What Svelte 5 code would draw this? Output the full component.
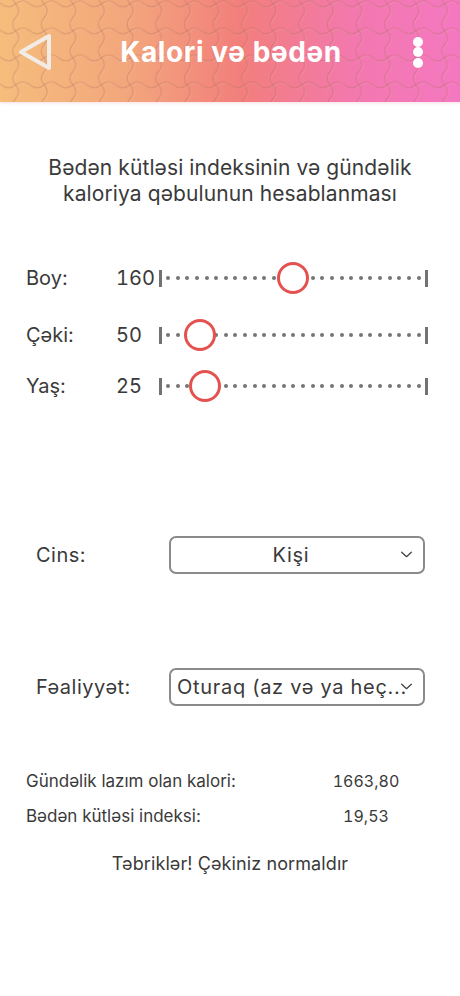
<script lang="ts">
	const sliders = [
		{ label: 'Boy:', value: 160, pos: 131.300, cls: 'boy' },
		{ label: 'Çəki:', value: 50, pos: 38, cls: 'ceki' },
		{ label: 'Yaş:', value: 25, pos: 43, cls: 'yas' }
	];
	const dots = Array(27);
</script>

<div class="page">
	<header class="topbar">
		<svg class="waves" aria-hidden="true">
			<defs>
				<g id="cell">
					<path d="M0 9.750C7.150 9.750 7.150 3.750 14.300 3.750S21.450 9.750 28.600 9.750" />
					<path d="M4.150 0C4.150 6.750 10.150 6.750 10.150 13.500S4.150 20.250 4.150 27" />
				</g>
				<pattern id="wave" width="28.600" height="27" patternUnits="userSpaceOnUse" x="8.600" y="-2.750">
					<use href="#cell" class="shine" x="0.800" y="0.800" />
					<use href="#cell" class="groove" />
				</pattern>
			</defs>
			<rect width="100%" height="100%" fill="url(#wave)" />
		</svg>
		<button class="icon-btn back" aria-label="Geri">
			<svg viewBox="0 0 40 44" width="40" height="44">
				<polygon points="5,22 33,6 33,38" />
			</svg>
		</button>
		<h1>Kalori və bədən</h1>
		<button class="icon-btn more" aria-label="Menyu">
			<span></span>
			<span></span>
			<span></span>
		</button>
	</header>

	<main>
		<p class="intro">Bədən kütləsi indeksinin və gündəlik<br />kaloriya qəbulunun hesablanması</p>

		<section class="sliders">
			{#each sliders as s}
				<div class="slider-row {s.cls}">
					<span class="label">{s.label}</span>
					<span class="value">{s.value}</span>
					<div class="track">
						{#each dots as _}
							<i class="dot"></i>
						{/each}
						<div class="thumb" style="left: {s.pos}px"></div>
					</div>
				</div>
			{/each}
		</section>

		<div class="field gender">
			<span class="field-label">Cins:</span>
			<div class="select center">
				<span>Kişi</span>
				<svg class="chevron" viewBox="0 0 14 8" width="13" height="7">
					<path d="M1.500 1.500L7 6.500L12.500 1.500" />
				</svg>
			</div>
		</div>

		<div class="field activity">
			<span class="field-label">Fəaliyyət:</span>
			<div class="select">
				<span>Oturaq (az və ya heç...</span>
				<svg class="chevron" viewBox="0 0 14 8" width="13" height="7">
					<path d="M1.500 1.500L7 6.500L12.500 1.500" />
				</svg>
			</div>
		</div>

		<section class="results">
			<div class="result">
				<span>Gündəlik lazım olan kalori:</span>
				<span class="num">1663,80</span>
			</div>
			<div class="result">
				<span>Bədən kütləsi indeksi:</span>
				<span class="num">19,53</span>
			</div>
		</section>

		<p class="message">Təbriklər! Çəkiniz normaldır</p>
	</main>
</div>

<style>
	:global(body) {
		margin: 0;
		background: #fff;
	}

	.page {
		width: 460px;
		height: 996px;
		overflow: hidden;
		font-family: Inter, 'Noto Sans', sans-serif;
		color: #3a3a3a;
	}

	.topbar {
		position: relative;
		display: flex;
		align-items: center;
		justify-content: space-between;
		height: 102px;
		padding: 2px 30px 0 16px;
		box-sizing: border-box;
		background: linear-gradient(90deg, #f5bd7c 0%, #f3a67c 28%, #f27f7c 52%, #f378b0 78%, #f478c0 100%);
		box-shadow: 0 1px 3px rgba(240, 160, 170, 0.35);
	}

	.waves {
		position: absolute;
		inset: 0;
		width: 100%;
		height: 100%;
	}

	.waves :global(path) {
		fill: none;
		stroke-width: 1.200;
	}

	.waves :global(.groove) {
		stroke: rgba(170, 90, 70, 0.3);
	}

	.waves :global(.shine) {
		stroke: rgba(255, 255, 255, 0.1);
	}

	.topbar h1 {
		position: relative;
		margin: 0;
		font-size: 28px;
		font-weight: 700;
		letter-spacing: 0.6px;
		color: #fff;
	}

	.icon-btn {
		position: relative;
		padding: 0;
		background: none;
		border: none;
	}

	.back svg {
		display: block;
	}

	.back polygon {
		fill: none;
		stroke: #f1ece6;
		stroke-width: 4;
		stroke-linejoin: round;
	}

	.more {
		display: flex;
		flex-direction: column;
		gap: 0.5px;
		width: 24px;
		align-items: center;
	}

	.more span {
		width: 10px;
		height: 10px;
		border-radius: 50%;
		background: #fff;
	}

	.intro {
		margin: 53px 0 0;
		font-size: 21px;
		line-height: 26px;
		letter-spacing: 0.1px;
		text-align: center;
	}

	.sliders {
		margin-top: 54px;
	}

	.slider-row {
		display: flex;
		align-items: center;
		height: 34px;
		padding-left: 26px;
		font-size: 20px;
	}

	.slider-row.ceki {
		margin-top: 23px;
	}

	.slider-row.yas {
		margin-top: 17px;
	}

	.label {
		width: 90px;
	}

	.value {
		width: 43px;
		font-variant-numeric: tabular-nums;
	}

	.track {
		position: relative;
		display: flex;
		align-items: center;
		justify-content: space-between;
		width: 269px;
		height: 17px;
		padding: 0 4px;
		box-sizing: border-box;
		border-left: 3px solid #727272;
		border-right: 3px solid #727272;
	}

	.dot {
		width: 4px;
		height: 4px;
		border-radius: 50%;
		background: #757575;
	}

	.thumb {
		position: absolute;
		top: 50%;
		width: 32px;
		height: 32px;
		box-sizing: border-box;
		transform: translate(-50%, -50%);
		background: #fff;
		border: 3px solid #e4524f;
		border-radius: 50%;
	}

	.field {
		display: flex;
		align-items: center;
		padding-left: 36px;
		font-size: 20px;
		letter-spacing: 0.5px;
	}

	.field.gender {
		margin-top: 133px;
	}

	.field.activity {
		margin-top: 94px;
	}

	.field-label {
		width: 133px;
	}

	.select {
		position: relative;
		display: flex;
		align-items: center;
		width: 256px;
		height: 38px;
		padding-left: 6px;
		box-sizing: border-box;
		border: 2px solid #8a8a8a;
		border-radius: 7px;
		white-space: nowrap;
		letter-spacing: 0.7px;
		overflow: hidden;
	}

	.select.center {
		justify-content: center;
		padding: 0 20px 0 8px;
	}

	.chevron {
		position: absolute;
		right: 10px;
		top: 13px;
	}

	.chevron path {
		fill: none;
		stroke: #444;
		stroke-width: 1.500;
		stroke-linecap: round;
		stroke-linejoin: round;
	}

	.results {
		margin-top: 57px;
		padding-left: 26px;
		font-size: 17px;
	}

	.result {
		display: grid;
		grid-template-columns: 295px 90px;
		align-items: center;
		height: 35px;
	}

	.num {
		font-size: 16px;
		text-align: center;
		font-variant-numeric: tabular-nums;
	}

	.message {
		margin: 19px 0 0;
		font-size: 18px;
		line-height: 24px;
		letter-spacing: 0.1px;
		text-align: center;
	}
</style>
